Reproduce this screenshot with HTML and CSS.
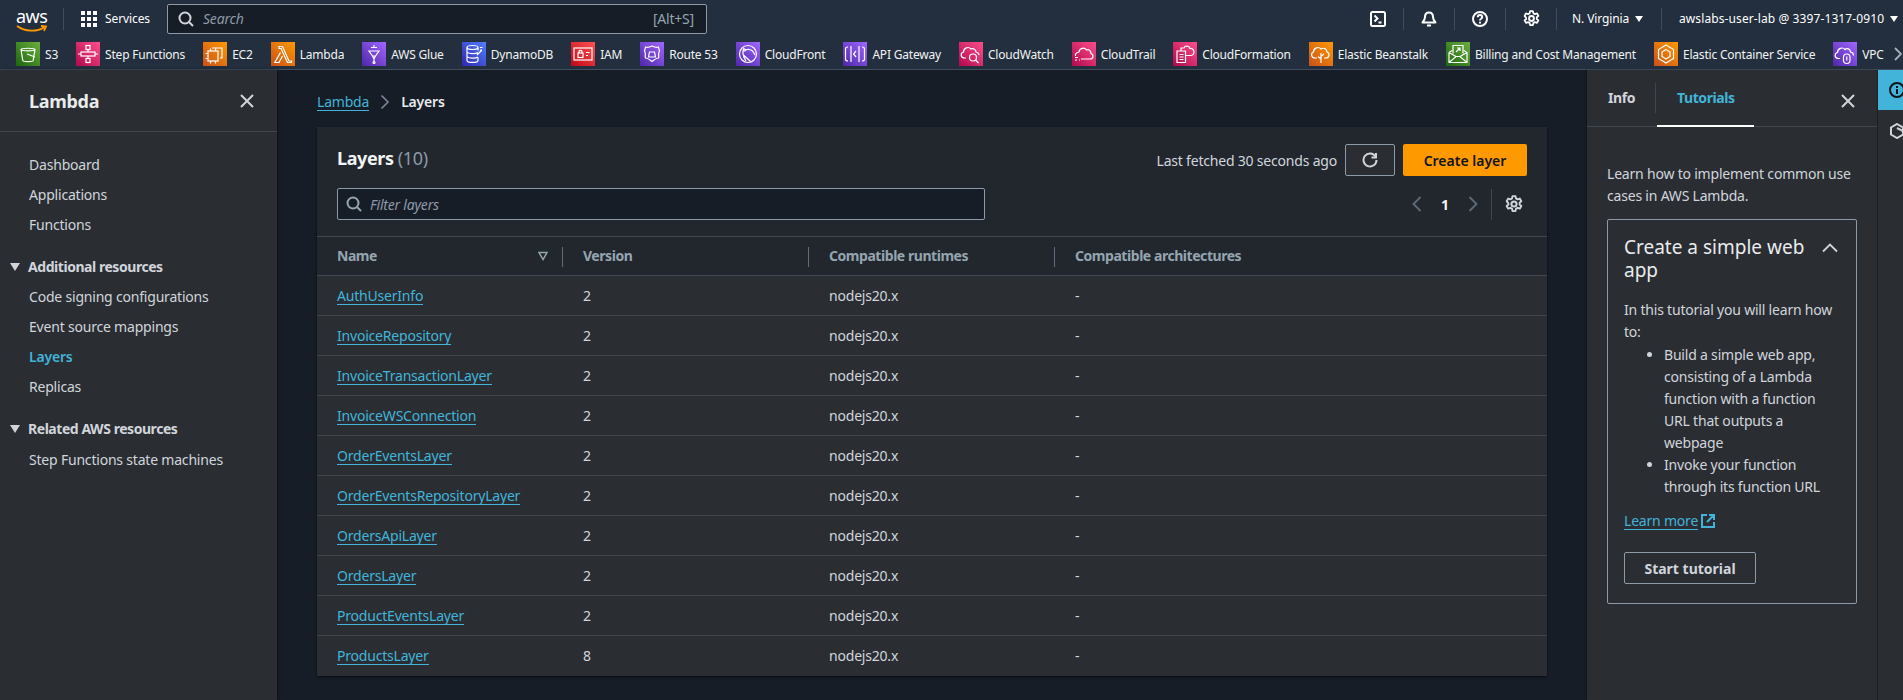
FILE: index.html
```html
<!DOCTYPE html>
<html lang="en">
<head>
  <meta charset="UTF-8">
  <title>Layers | Lambda</title>
  <link rel="stylesheet" href="styles.css">
</head>
<body>

<svg class="defs" width="0" height="0">
  <symbol id="gear" viewBox="0 0 16 16">
    <circle cx="8" cy="8" r="2.300" fill="none" stroke="currentColor" stroke-width="1.800"/>
    <path d="M6.700 1h2.600l.4 2 1.500.9 2-.7 1.300 2.300-1.500 1.300v1.700l1.500 1.300-1.300 2.300-2-.7-1.500.9-.4 2H6.700l-.4-2-1.500-.9-2 .7-1.300-2.300 1.500-1.300V7.500L1.500 5.500l1.300-2.300 2 .7 1.500-.9z" fill="none" stroke="currentColor" stroke-width="1.700" stroke-linejoin="round"/>
  </symbol>
  <symbol id="close" viewBox="0 0 16 16">
    <path d="M2 2l12 12M14 2L2 14" fill="none" stroke="currentColor" stroke-width="2"/>
  </symbol>
  <symbol id="loupe" viewBox="0 0 16 16">
    <circle cx="7" cy="7" r="5.500" fill="none" stroke="currentColor" stroke-width="2"/>
    <path d="M11 11l4 4" fill="none" stroke="currentColor" stroke-width="2"/>
  </symbol>
</svg>

<header class="topnav">
  <div class="nav-main">
    <a class="logo">
      <span class="logo-text">aws</span>
      <svg class="logo-smile" width="32" height="8" viewBox="0 0 32 8"><path d="M1 1c8 6 20 6 27 1.500M25 1l5 .5-2 4.500" fill="none" stroke="#f90" stroke-width="1.800"/></svg>
    </a>
    <span class="nav-sep logo-sep"></span>
    <a class="services">
      <svg width="16" height="16" viewBox="0 0 16 16" fill="#fff"><rect width="4" height="4"/><rect x="6" width="4" height="4"/><rect x="12" width="4" height="4"/><rect y="6" width="4" height="4"/><rect x="6" y="6" width="4" height="4"/><rect x="12" y="6" width="4" height="4"/><rect y="12" width="4" height="4"/><rect x="6" y="12" width="4" height="4"/><rect x="12" y="12" width="4" height="4"/></svg>
      Services
    </a>
    <div class="nav-search">
      <svg class="icon-16" width="16" height="16"><use href="#loupe"/></svg>
      <span class="nav-search-text">Search</span>
      <span class="nav-search-key">[Alt+S]</span>
    </div>
    <div class="nav-tools">
      <a class="tool"><svg width="16" height="16" viewBox="0 0 16 16" fill="none" stroke="#fff" stroke-width="2"><rect x="1" y="1" width="14" height="14" rx="1.500"/><path d="M4.500 4.500L7.500 7.500 4.500 10.500M8.500 11.500h3"/></svg></a>
      <span class="nav-sep"></span>
      <a class="tool"><svg width="16" height="16" viewBox="0 0 16 16" fill="none" stroke="#fff" stroke-width="2"><path d="M8 1.500c-3 0-4 2.500-4 4.500 0 3-1 4-2.500 5.500h13C13 10 12 9 12 6c0-2-1-4.500-4-4.500z" stroke-linejoin="round"/><path d="M6 14.500h4"/></svg></a>
      <span class="nav-sep"></span>
      <a class="tool"><svg width="16" height="16" viewBox="0 0 16 16" fill="none" stroke="#fff" stroke-width="2"><circle cx="8" cy="8" r="7"/><path d="M5.800 6.200C5.800 4.800 6.800 4 8 4s2.200.8 2.200 2c0 1.700-2.200 1.700-2.200 3.500M8 10.800v1.700"/></svg></a>
      <span class="nav-sep"></span>
      <a class="tool"><svg width="17" height="17"><use href="#gear"/></svg></a>
      <span class="nav-sep"></span>
      <a class="menu region">N. Virginia <i class="caret"></i></a>
      <span class="nav-sep"></span>
      <a class="menu account">awslabs-user-lab @ 3397-1317-0910 <i class="caret"></i></a>
    </div>
  </div>

  <div class="favs">
    <a class="fav"><span class="fav-icon green"><svg viewBox="0 0 24 24"><path d="M5 7.500c0-1.700 14-1.700 14 0l-1.800 11c-.3 1.500-10.100 1.500-10.400 0zM5 7.500c1 1.800 13 1.800 14 0M11 12l8 3"/></svg></span>S3</a>
    <a class="fav"><span class="fav-icon pink"><svg viewBox="0 0 24 24"><rect x="10" y="3.500" width="4" height="4"/><rect x="5" y="10" width="14" height="4"/><rect x="10" y="16.500" width="4" height="4"/><path d="M12 7.500V10M12 14v2.500M2 12h3M19 12h3"/></svg></span>Step Functions</a>
    <a class="fav"><span class="fav-icon orange"><svg viewBox="0 0 24 24"><rect x="5" y="9" width="10" height="10"/><path d="M9 6h10v10h-2M7.500 9V6.500M12.500 9V6.500M5 11.500H2.500M5 16.500H2.500M7.500 19v2.500M12.500 19v2.500"/></svg></span>EC2</a>
    <a class="fav"><span class="fav-icon orange"><svg viewBox="0 0 24 24"><path d="M8 4.500h3.500l6.500 14.500h2.500v1.500H16.500L10 6.500H8zM9.500 10.500L3.800 20.500H8l3.500-6.500"/></svg></span>Lambda</a>
    <a class="fav"><span class="fav-icon purple"><svg viewBox="0 0 24 24"><path d="M7 9h10l-3.500 5h-3zM10.500 14l1.500 3 1.500-3M12 17v3M9 5.500h6M12 3v3"/><circle cx="12" cy="20.500" r="1"/></svg></span>AWS Glue</a>
    <a class="fav"><span class="fav-icon blue"><svg viewBox="0 0 24 24"><ellipse cx="10.500" cy="5.500" rx="5.500" ry="2"/><path d="M5 5.500v13c0 2.600 11 2.600 11 0v-3M5 10c1.500 2 9 2 11 .5M5 14.500c1.500 2 9 2 11 .5M16 5.500v3M15 13l5-5M18 5.500h2.500M18 8h2"/></svg></span>DynamoDB</a>
    <a class="fav"><span class="fav-icon red"><svg viewBox="0 0 24 24"><rect x="3" y="6" width="18" height="12"/><rect x="7" y="11" width="5" height="4.500"/><path d="M8 11V9.500c0-1.600 3-1.600 3 0V11M15 10.500h3.500M15 13.500h2"/></svg></span>IAM</a>
    <a class="fav"><span class="fav-icon purple"><svg viewBox="0 0 24 24"><path d="M5.500 5c2 1 4.500 0 6.500-1 2 1 4.500 2 6.500 1 .5 2 .5 3 1 4-2 3 0 5-1 7-2 0-4 1.500-6.500 3.500-2.500-2-4.500-3.500-6.500-3.500-1-2 1-4-1-7 .5-1 .5-2 1-4z"/><path d="M8.500 15h7l-1-5h-5z"/></svg></span>Route 53</a>
    <a class="fav"><span class="fav-icon purple"><svg viewBox="0 0 24 24"><circle cx="12" cy="12" r="8.500"/><path d="M8 6c-2 4-1.500 8 2 13M9 8c4-1.500 8 0 10 5M7.500 13l7 6.500"/><circle cx="8.500" cy="8" r="1"/></svg></span>CloudFront</a>
    <a class="fav"><span class="fav-icon purple"><svg viewBox="0 0 24 24"><path d="M5 5c-2 0-2.500 1-2.500 2v10c0 1 .5 2 2.500 2M8 4v16M16 4v16M19 5c2 0 2.500 1 2.500 2v10c0 1-.5 2-2.500 2M13 9l-2.500 3 2.500 3"/></svg></span>API Gateway</a>
    <a class="fav"><span class="fav-icon pink"><svg viewBox="0 0 24 24"><path d="M7 16H5.500c-4 0-4.500-5-1-6 0-4 5-6 7.500-3 2.500-1 5 .5 5 3 1.500.5 3 1.500 3 3"/><circle cx="14" cy="15.500" r="3.500"/><path d="M16.500 18l3 3"/></svg></span>CloudWatch</a>
    <a class="fav"><span class="fav-icon pink"><svg viewBox="0 0 24 24"><path d="M9 17h9c3.500 0 4-4.500 1-5.500 0-3-2.500-4.500-4.500-3.500-2-3-7-2-7.500 2-3 .5-4 2.500-3.500 4M3 15.500h3M3 18h2M7 18h1"/></svg></span>CloudTrail</a>
    <a class="fav"><span class="fav-icon pink"><svg viewBox="0 0 24 24"><path d="M4 9h8.500v11.500H4zM6.500 12.500h4M6.500 15h4M6.500 17.500h4M8 9V6h3c1-2.500 5-2.500 6 .5 3-.5 5 3 3.500 5.500-.5 1-1.500 1.500-3 1.500h-5"/></svg></span>CloudFormation</a>
    <a class="fav"><span class="fav-icon orange"><svg viewBox="0 0 24 24"><path d="M8 16H6c-4 0-4.500-5-1.500-6 0-4 5-6 7.500-3 3-2 6 .5 6 3 3 1 2.500 6-1 6h-2M12 21V11M12 17l-3-2.500M12 14.500l3-2.500"/></svg></span>Elastic Beanstalk</a>
    <a class="fav"><span class="fav-icon green"><svg viewBox="0 0 24 24"><path d="M3 10.500v10h18v-10l-3-2M3 10.500l3-2M3 20.500l7-6h4l7 6M3 10.500l7 4M21 10.500l-7 4M7 11.500V3.500h10v8M10 10l4-4M11 6h3v3"/></svg></span>Billing and Cost Management</a>
    <a class="fav"><span class="fav-icon orange"><svg viewBox="0 0 24 24"><path d="M12 3l7.500 4.500v9L12 21l-7.500-4.500v-9zM12 7.500l4 2.500v4.500l-4 2.500-4-2.500V10z"/></svg></span>Elastic Container Service</a>
    <a class="fav"><span class="fav-icon purple"><svg viewBox="0 0 24 24"><path d="M7 16.500H5.500c-4 0-4.500-5-1-6 0-4 5-6 7.500-3 2-2 5.500-.5 5.500 2.500 1.500.3 3 1.500 3 3.500"/><rect x="10.500" y="12" width="6.500" height="9.500" rx="3.200"/><path d="M13.750 14.500v4"/></svg></span>VPC</a>
    <svg class="favs-more" width="10" height="14" viewBox="0 0 10 14"><path d="M2 1l6 6-6 6" fill="none" stroke="#a2aeb8" stroke-width="1.800"/></svg>
  </div>
</header>

<div class="layout">
  <nav class="sidenav">
    <div class="sidenav-head">
      <h2>Lambda</h2>
      <svg class="sidenav-close" width="16" height="16"><use href="#close"/></svg>
    </div>
    <ul class="sidenav-list">
      <li>Dashboard</li>
      <li>Applications</li>
      <li>Functions</li>
    </ul>
    <h3 class="sidenav-section"><i class="tri"></i>Additional resources</h3>
    <ul class="sidenav-list">
      <li>Code signing configurations</li>
      <li>Event source mappings</li>
      <li class="active">Layers</li>
      <li>Replicas</li>
    </ul>
    <h3 class="sidenav-section"><i class="tri"></i>Related AWS resources</h3>
    <ul class="sidenav-list related">
      <li>Step Functions state machines</li>
    </ul>
  </nav>

  <main class="content">
    <div class="crumbs">
      <a class="link">Lambda</a>
      <svg width="10" height="16" viewBox="0 0 10 16"><path d="M1.500 1.500L8 8l-6.500 6.500" fill="none" stroke="#7d8998" stroke-width="1.600"/></svg>
      <b>Layers</b>
    </div>

    <section class="card">
      <div class="card-head">
        <div class="card-title-row">
          <h1>Layers <span class="count">(10)</span></h1>
          <div class="card-actions">
            <span class="fetched">Last fetched 30 seconds ago</span>
            <button class="btn-refresh"><svg width="16" height="16" viewBox="0 0 16 16" fill="none" stroke="#d1d5db" stroke-width="2"><path d="M13.500 4.500A6.500 6.500 0 1 0 14.500 8"/><path d="M14 1v4.500H9.500"/></svg></button>
            <button class="btn-create">Create layer</button>
          </div>
        </div>
        <div class="card-filter-row">
          <div class="filter">
            <svg width="16" height="16"><use href="#loupe"/></svg>
            <span>Filter layers</span>
          </div>
          <div class="pager">
            <svg width="10" height="16" viewBox="0 0 10 16"><path d="M8.500 1L1.500 8l7 7" fill="none" stroke="#5f6b7a" stroke-width="1.800"/></svg>
            <b>1</b>
            <svg width="10" height="16" viewBox="0 0 10 16"><path d="M1.500 1l7 7-7 7" fill="none" stroke="#5f6b7a" stroke-width="1.800"/></svg>
            <span class="pager-sep"></span>
            <svg class="pager-gear" width="18" height="18"><use href="#gear"/></svg>
          </div>
        </div>
      </div>

      <table class="layers">
        <thead>
          <tr>
            <th><span>Name</span><svg class="sort" width="10" height="10" viewBox="0 0 10 10"><path d="M1 1.500h8L5 8.500z" fill="none" stroke="#95a5b0" stroke-width="1.500"/></svg></th>
            <th>Version</th>
            <th>Compatible runtimes</th>
            <th class="last">Compatible architectures</th>
          </tr>
        </thead>
        <tbody>
          <tr><td><a class="link">AuthUserInfo</a></td><td>2</td><td>nodejs20.x</td><td>-</td></tr>
          <tr><td><a class="link">InvoiceRepository</a></td><td>2</td><td>nodejs20.x</td><td>-</td></tr>
          <tr><td><a class="link">InvoiceTransactionLayer</a></td><td>2</td><td>nodejs20.x</td><td>-</td></tr>
          <tr><td><a class="link">InvoiceWSConnection</a></td><td>2</td><td>nodejs20.x</td><td>-</td></tr>
          <tr><td><a class="link">OrderEventsLayer</a></td><td>2</td><td>nodejs20.x</td><td>-</td></tr>
          <tr><td><a class="link">OrderEventsRepositoryLayer</a></td><td>2</td><td>nodejs20.x</td><td>-</td></tr>
          <tr><td><a class="link">OrdersApiLayer</a></td><td>2</td><td>nodejs20.x</td><td>-</td></tr>
          <tr><td><a class="link">OrdersLayer</a></td><td>2</td><td>nodejs20.x</td><td>-</td></tr>
          <tr><td><a class="link">ProductEventsLayer</a></td><td>2</td><td>nodejs20.x</td><td>-</td></tr>
          <tr><td><a class="link">ProductsLayer</a></td><td>8</td><td>nodejs20.x</td><td>-</td></tr>
        </tbody>
      </table>
    </section>
  </main>

  <aside class="helppanel">
    <div class="tabs">
      <span class="tab">Info</span>
      <span class="tab tab-active">Tutorials</span>
      <svg class="tabs-close" width="16" height="16"><use href="#close"/></svg>
    </div>
    <div class="helppanel-body">
      <p class="intro">Learn how to implement common use cases in AWS Lambda.</p>
      <div class="tutorial">
        <div class="tutorial-head">
          <h4>Create a simple web app</h4>
          <svg width="16" height="10" viewBox="0 0 16 10"><path d="M1 8.500l7-7 7 7" fill="none" stroke="#d1d5db" stroke-width="1.800"/></svg>
        </div>
        <p>In this tutorial you will learn how to:</p>
        <ul>
          <li>Build a simple web app, consisting of a Lambda function with a function URL that outputs a webpage</li>
          <li>Invoke your function through its function URL</li>
        </ul>
        <a class="learn"><span class="link">Learn more</span>
          <svg width="14" height="14" viewBox="0 0 14 14" fill="none" stroke="#42b4d9" stroke-width="2"><path d="M6 1H1v12h12V8M8 1h5v5M13 1L6 8"/></svg>
        </a>
        <button class="btn-start">Start tutorial</button>
      </div>
    </div>
  </aside>

  <div class="rail">
    <div class="rail-active">
      <svg width="16" height="16" viewBox="0 0 16 16" fill="none" stroke="#0f141a" stroke-width="2"><circle cx="8" cy="8" r="7"/><path d="M8 7v5M8 4v2"/></svg>
    </div>
    <div class="rail-item">
      <svg width="14" height="16" viewBox="0 0 14 16" fill="none" stroke="#d1d5db" stroke-width="2"><path d="M7 1l6 3.500v7L7 15l-6-3.500v-7z"/><path d="M7 5l6 3"/></svg>
    </div>
  </div>
</div>

</body>
</html>
```

FILE: styles.css
```css
* {
  box-sizing: border-box;
}
html, body {
  height: 700px;
  overflow: hidden;
}
body {
  margin: 0;
  font-family: "Noto Sans", "Open Sans", sans-serif;
  font-size: 14px;
  letter-spacing: -0.2px;
  color: #d1d5db;
  background: #161d26;
  display: flex;
  flex-direction: column;
}
.defs {
  position: absolute;
}
h1, h2, h3, h4, p, ul {
  margin: 0;
  padding: 0;
}
button {
  font-family: inherit;
}

/* top navigation */
.topnav {
  background: #232f3e;
  height: 70px;
  border-bottom: 1px solid #414d5c;
  color: #fff;
  flex-shrink: 0;
}
.nav-main {
  height: 37px;
  display: flex;
  align-items: center;
  padding: 0 0 0 16px;
}
.logo {
  width: 31px;
  height: 30px;
  display: block;
  position: relative;
}
.logo-text {
  font-size: 18px;
  line-height: 18px;
  display: block;
  margin-top: 3px;
  letter-spacing: -0.5px;
}
.logo-smile {
  position: absolute;
  left: 0;
  top: 21px;
}
.nav-sep {
  width: 1px;
  height: 22px;
  background: #414d5c;
}
.logo-sep {
  margin-left: 16px;
}
.services {
  display: flex;
  align-items: center;
  gap: 8px;
  font-size: 12px;
  margin-left: 17px;
  width: 86px;
  letter-spacing: -0.1px;
}
.nav-search {
  width: 540px;
  height: 30px;
  background: #161d26;
  border: 1px solid #8d99a8;
  border-radius: 2px;
  display: flex;
  align-items: center;
  padding: 0 12px 0 10px;
  color: #d1d5db;
}
.nav-search-text {
  font-style: italic;
  margin-left: 9px;
  color: #8d99a8;
  font-size: 14px;
  flex: 1;
}
.nav-search-key {
  color: #95a5b0;
  font-size: 14px;
}
.nav-tools {
  margin-left: auto;
  display: flex;
  align-items: center;
  font-size: 12px;
}
.tool {
  width: 50px;
  display: flex;
  justify-content: center;
  color: #fff;
}
.menu {
  display: flex;
  align-items: center;
  gap: 6px;
  white-space: nowrap;
}
.region {
  width: 104px;
  padding-left: 15px;
  letter-spacing: -0.1px;
}
.account {
  width: 241px;
  padding-left: 17px;
  letter-spacing: 0.1px;
}
.caret {
  width: 0;
  height: 0;
  border-left: 4px solid transparent;
  border-right: 4px solid transparent;
  border-top: 6px solid #fff;
}
.favs {
  height: 32px;
  display: flex;
  align-items: flex-start;
  padding: 5px 0 0 16px;
  position: relative;
  overflow: hidden;
}
.fav {
  display: flex;
  align-items: center;
  gap: 5px;
  height: 24px;
  font-size: 12px;
  margin-right: 18px;
  white-space: nowrap;
  color: #f2f3f3;
  letter-spacing: -0.2px;
}
.fav-icon {
  width: 24px;
  height: 24px;
  display: block;
  flex-shrink: 0;
}
.fav-icon svg {
  display: block;
  width: 24px;
  height: 24px;
  fill: none;
  stroke: #fff;
  stroke-width: 1.200;
}
.green { background: linear-gradient(45deg, #1b660f, #6cae3e); }
.pink { background: linear-gradient(45deg, #b0084d, #ff4f8b); }
.orange { background: linear-gradient(45deg, #c8511b, #f90); }
.purple { background: linear-gradient(45deg, #4d27a8, #a166ff); }
.blue { background: linear-gradient(45deg, #2e27ad, #527fff); }
.red { background: linear-gradient(45deg, #bd0816, #ff5252); }
.favs-more {
  position: absolute;
  right: 0;
  top: 10px;
}

/* page layout */
.layout {
  flex: 1;
  display: flex;
  min-height: 0;
}
.sidenav {
  width: 277px;
  background: #2a2e33;
  flex-shrink: 0;
  box-shadow: 1px 0 3px rgba(0, 0, 0, 0.4);
}
.sidenav-head {
  height: 62px;
  padding: 0 22px 0 29px;
  display: flex;
  align-items: center;
  justify-content: space-between;
  border-bottom: 1px solid #414750;
  margin-bottom: 18px;
}
.sidenav-head h2 {
  font-size: 18px;
  font-weight: 700;
  color: #e9ebed;
  letter-spacing: -0.3px;
}
.sidenav-close {
  color: #d1d5db;
}
.sidenav-list {
  list-style: none;
  padding-left: 29px;
  margin-bottom: 12px;
}
.sidenav-list li {
  height: 30px;
  line-height: 30px;
}
.sidenav-list li.active {
  color: #42b4d9;
  font-weight: 600;
}
.sidenav-list.related {
  padding-top: 1px;
}
.sidenav-section {
  font-size: 14px;
  font-weight: 700;
  letter-spacing: -0.45px;
  height: 30px;
  line-height: 30px;
  display: flex;
  align-items: center;
  padding-left: 10px;
  gap: 8px;
}
.tri {
  width: 0;
  height: 0;
  border-left: 5px solid transparent;
  border-right: 5px solid transparent;
  border-top: 8px solid #d1d5db;
}

/* main content */
.content {
  flex: 1;
  min-width: 0;
  padding: 0 40px;
}
.crumbs {
  height: 57px;
  padding-top: 6px;
  display: flex;
  align-items: center;
  gap: 11px;
}
.crumbs b {
  font-weight: 600;
  color: #e9ebed;
}
.link {
  color: #42b4d9;
  border-bottom: 1px solid #42b4d9;
  line-height: 17px;
  display: inline-block;
}
.card {
  background: #22272e;
  box-shadow: 0 1px 2px rgba(0, 0, 0, 0.6);
}
.card-head {
  padding: 17px 20px 16px;
}
.card-title-row {
  display: flex;
  justify-content: space-between;
  align-items: center;
  height: 32px;
}
.card-title-row h1 {
  font-size: 18px;
  font-weight: 700;
  color: #f2f3f3;
  margin-top: -4px;
  letter-spacing: -0.4px;
}
.count {
  font-weight: 400;
  color: #8d99a8;
}
.card-actions {
  display: flex;
  align-items: center;
}
.fetched {
  margin-right: 8px;
}
.btn-refresh {
  width: 50px;
  height: 32px;
  background: #2a2e33;
  border: 1px solid #8d99a8;
  border-radius: 2px;
  display: flex;
  align-items: center;
  justify-content: center;
  margin-right: 8px;
  padding: 0;
}
.btn-create {
  width: 124px;
  height: 32px;
  background: #f90;
  border: none;
  border-radius: 2px;
  font-size: 14px;
  font-weight: 600;
  color: #0f141a;
  padding: 0;
}
.card-filter-row {
  display: flex;
  justify-content: space-between;
  align-items: center;
  margin-top: 12px;
  height: 32px;
}
.filter {
  width: 648px;
  height: 32px;
  background: #161d26;
  border: 1px solid #8d99a8;
  border-radius: 2px;
  display: flex;
  align-items: center;
  padding: 0 8px;
  gap: 8px;
  color: #95a5b0;
}
.filter span {
  font-style: italic;
  font-size: 14px;
  color: #8d99a8;
}
.pager {
  display: flex;
  align-items: center;
  height: 32px;
  color: #d1d5db;
}
.pager b {
  width: 46px;
  text-align: center;
  font-weight: 700;
  color: #f2f3f3;
}
.pager-sep {
  width: 1px;
  height: 31px;
  background: #414750;
  margin-left: 13px;
}
.pager-gear {
  margin: 0 4px 0 13px;
}
.layers {
  width: 100%;
  border-collapse: collapse;
  table-layout: fixed;
}
.layers th,
.layers td {
  width: 246px;
  padding: 0 20px;
  text-align: left;
}
.layers th.last,
.layers td:last-child {
  width: auto;
}
.layers th {
  height: 39px;
  padding-bottom: 2px;
  font-weight: 700;
  letter-spacing: -0.45px;
  color: #95a5b0;
  border-top: 1px solid #414750;
  position: relative;
}
.layers th::after {
  content: "";
  position: absolute;
  right: 0;
  top: 10px;
  height: 20px;
  width: 1px;
  background: #5f6b7a;
}
.layers th.last::after {
  display: none;
}
.sort {
  position: absolute;
  right: 15px;
  top: 14px;
}
.layers td {
  height: 40px;
  background: #2a2e33;
  border-top: 1px solid #414750;
}

/* help panel */
.helppanel {
  width: 290px;
  background: #2a2e33;
  flex-shrink: 0;
  box-shadow: -1px 0 2px rgba(0, 0, 0, 0.3);
}
.tabs {
  height: 57px;
  border-bottom: 1px solid #414750;
  display: flex;
  position: relative;
  padding-left: 21px;
}
.tab {
  font-weight: 700;
  letter-spacing: -0.4px;
  margin-top: 13px;
  height: 30px;
  line-height: 30px;
  width: 48px;
  border-right: 1px solid #414750;
}
.tab-active {
  color: #42b4d9;
  border-right: none;
  width: auto;
  padding-left: 21px;
}
.tab-active::after {
  content: "";
  position: absolute;
  left: 70px;
  bottom: -1px;
  width: 97px;
  height: 2px;
  background: #fff;
}
.tabs-close {
  position: absolute;
  right: 21px;
  top: 23px;
}
.helppanel-body {
  padding: 36px 20px 0 20px;
}
.intro {
  line-height: 22px;
  margin-bottom: 12px;
}
.tutorial {
  border: 1px solid #8d99a8;
  border-radius: 2px;
  padding: 16px 16px 19px;
  height: 385px;
}
.tutorial-head {
  display: flex;
  justify-content: space-between;
  align-items: flex-start;
}
.tutorial-head h4 {
  font-size: 19px;
  font-weight: 400;
  line-height: 23px;
  width: 190px;
  letter-spacing: 0;
  color: #e9ebed;
}
.tutorial-head svg {
  margin: 7px 2px 0 0;
}
.tutorial p {
  line-height: 22px;
  margin-top: 17px;
}
.tutorial ul {
  padding-left: 40px;
  line-height: 22px;
  margin-top: 1px;
}
.learn {
  display: flex;
  align-items: center;
  gap: 3px;
  margin-top: 14px;
}
.btn-start {
  display: block;
  width: 132px;
  height: 32px;
  margin-top: 22px;
  background: #2a2e33;
  border: 1px solid #8d99a8;
  border-radius: 2px;
  font-size: 14px;
  font-weight: 700;
  color: #d1d5db;
  padding: 0;
}
.rail {
  width: 26px;
  flex-shrink: 0;
  overflow: hidden;
  background: #2a2e33;
  border-left: 1px solid #1b2027;
}
.rail-active {
  height: 40px;
  background: #42b4d9;
  padding: 12px 0 0 11px;
}
.rail-active svg,
.rail-item svg {
  display: block;
}
.rail-item {
  padding: 13px 0 0 12px;
}
```
